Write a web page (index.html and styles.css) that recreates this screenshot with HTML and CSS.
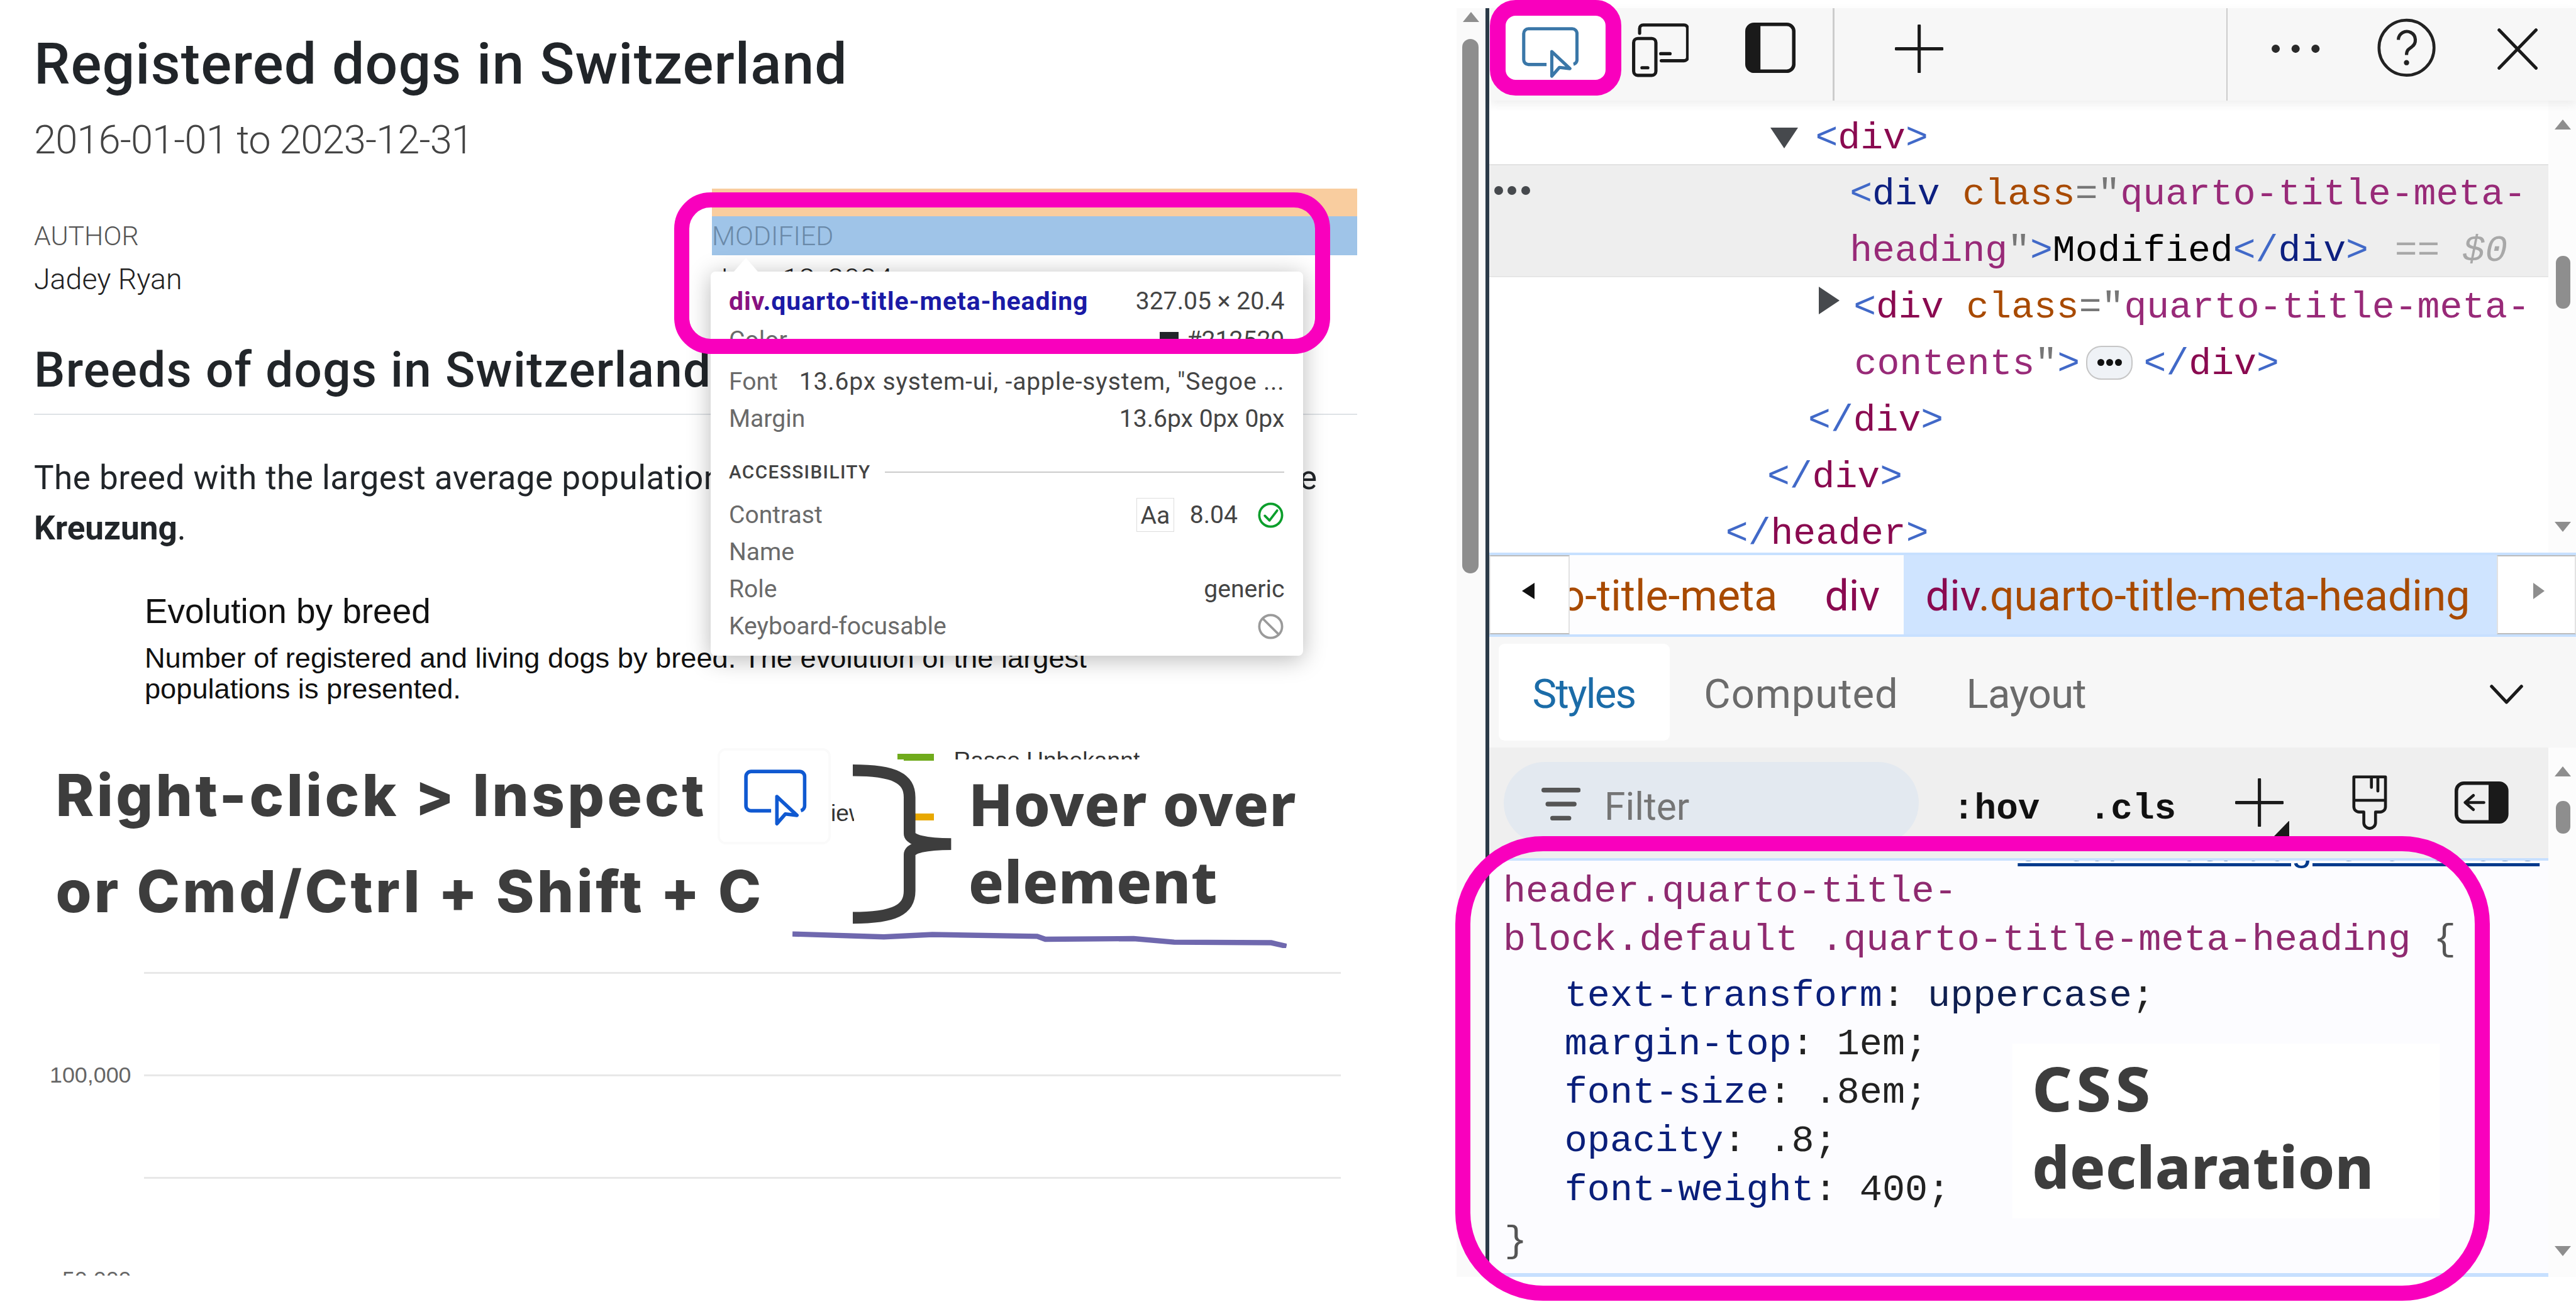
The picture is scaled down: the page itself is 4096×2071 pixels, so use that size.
FILE: index.html
```html
<!DOCTYPE html>
<html lang="en">
<head>
<meta charset="utf-8">
<title>Registered dogs in Switzerland – DevTools</title>
<link rel="stylesheet" href="styles.css">
</head>
<body>
<svg class="defs" aria-hidden="true">
  <symbol id="i-inspect" viewBox="0 0 97 88">
    <path d="M42 64H11a8 8 0 0 1-8-8V11a8 8 0 0 1 8-8h75a8 8 0 0 1 8 8v45a8 8 0 0 1-6 7.7" fill="none" stroke="currentColor" stroke-width="5.5"/>
    <path d="M51 42 82 71 64 69 51 84Z" fill="none" stroke="currentColor" stroke-width="5.5" stroke-linejoin="round"/>
  </symbol>
  <symbol id="i-plus" viewBox="0 0 83 83">
    <path d="M41.5 2v79M2 41.5h79" fill="none" stroke="#1a1a1a" stroke-width="5.5" stroke-linecap="round"/>
  </symbol>
</svg>
<main class="stage">
  <section class="page">
    <h1 class="title">Registered dogs in Switzerland</h1>
    <p class="subtitle">2016-01-01 to 2023-12-31</p>
    <div class="meta">
      <div>
        <div class="meta-box"><div class="meta-heading">Author</div></div>
        <div class="meta-value">Jadey Ryan</div>
      </div>
      <div>
        <div class="meta-box is-hover"><div class="meta-heading">Modified</div></div>
        <div class="meta-value">June 18, 2024</div>
      </div>
    </div>
    <h2 class="section">Breeds of dogs in Switzerland</h2>
    <p class="lead"><span>The breed with the largest average population</span><span>the</span></p>
    <p class="lead-end"><strong>Kreuzung</strong>.</p>
    <div class="chart-head">
      <div class="chart-title">Evolution by breed</div>
      <div class="chart-sub">Number of registered and living dogs by breed. The evolution of the largest<br>populations is presented.</div>
    </div>
    <div class="legend">
      <span></span><span class="swatch swatch-green"></span><span class="legend-text">Rasse Unbekannt</span>
      <span class="legend-cut">iew</span><span class="swatch swatch-orange"></span><span></span>
    </div>
    <div class="plot">
      <div class="plot-row"><span class="tick"></span><span class="gridline"></span></div>
      <div class="plot-row"><span class="tick">100,000</span><span class="gridline"></span></div>
      <div class="plot-row"><span class="tick"></span><span class="gridline"></span></div>
      <div class="plot-row"><span class="tick">50,000</span><span class="gridline"></span></div>
    </div>
  </section>

  <div class="page-scroll">
    <span class="arrow-up"></span>
    <span class="page-thumb"></span>
  </div>

  <section class="devtools">
    <header class="toolbar">
      <button class="tool-inspect"><svg class="ic-inspect"><use href="#i-inspect"/></svg></button>
      <svg class="ic-device" viewBox="0 0 97 92"><path d="M13 17V9a6 6 0 0 1 6-6h70a6 6 0 0 1 6 6v49a6 6 0 0 1-6 6H50M49 52h16" fill="none" stroke="#1a1a1a" stroke-width="5.5" stroke-linecap="round"/><rect x="2.8" y="26" width="38" height="63" rx="7" fill="none" stroke="#1a1a1a" stroke-width="5.5"/><path d="M17 76h10" stroke="#1a1a1a" stroke-width="5.5" stroke-linecap="round"/></svg>
      <svg class="ic-dock" viewBox="0 0 86 86"><rect x="3" y="3" width="80" height="80" rx="12" fill="none" stroke="#1a1a1a" stroke-width="6"/><path d="M14 3h12v80H14A11 11 0 0 1 3 72V14A11 11 0 0 1 14 3Z" fill="#1a1a1a"/></svg>
      <span class="tool-sep sep-a"></span>
      <svg class="ic-plus"><use href="#i-plus"/></svg>
      <span class="tool-sep sep-b"></span>
      <svg class="ic-more" viewBox="0 0 82 14"><circle cx="7" cy="7" r="7"/><circle cx="41" cy="7" r="7"/><circle cx="75" cy="7" r="7"/></svg>
      <svg class="ic-help" viewBox="0 0 100 103"><circle cx="50" cy="51.500" r="47" fill="none" stroke="#222" stroke-width="5"/><path d="M36 38a14.500 14.500 0 1 1 23 12c-6 4-9 6-9 14" fill="none" stroke="#222" stroke-width="5.500"/><circle cx="50" cy="77" r="4.500" fill="#222"/></svg>
      <svg class="ic-close" viewBox="0 0 69 71"><path d="M3 3l63 65M66 3 3 68" fill="none" stroke="#1a1a1a" stroke-width="5.500" stroke-linecap="round"/></svg>
    </header>

    <div class="elements">
      <div class="dom">
        <div class="row row-open"><span class="tri tri-down"></span><span class="b">&lt;</span><span class="t">div</span><span class="b">&gt;</span></div>
        <div class="row row-sel">
          <span class="gutter-dots"><i></i><i></i><i></i></span>
          <span class="line"><span class="b">&lt;</span><span class="ts">div</span> <span class="a">class</span><span class="q">="</span><span class="v">quarto-title-meta-</span></span>
          <span class="line"><span class="v">heading</span><span class="q">"</span><span class="b">&gt;</span>Modified<span class="b">&lt;/</span><span class="ts">div</span><span class="b">&gt;</span><span class="eq">== <em>$0</em></span></span>
        </div>
        <div class="row row-collapsed"><span class="tri tri-right"></span><span class="b">&lt;</span><span class="t">div</span> <span class="a">class</span><span class="q">="</span><span class="v">quarto-title-meta-</span></div>
        <div class="row row-contents"><span class="v">contents</span><span class="q">"</span><span class="b">&gt;</span><span class="pill"><i></i><i></i><i></i></span><span class="b">&lt;/</span><span class="t">div</span><span class="b">&gt;</span></div>
        <div class="row row-c1"><span class="b">&lt;/</span><span class="t">div</span><span class="b">&gt;</span></div>
        <div class="row row-c2"><span class="b">&lt;/</span><span class="t">div</span><span class="b">&gt;</span></div>
        <div class="row row-c3"><span class="b">&lt;/</span><span class="t">header</span><span class="b">&gt;</span></div>
      </div>
      <div class="side-scroll">
        <span class="arrow-up"></span>
        <span class="side-thumb thumb-dom"></span>
        <span class="arrow-down arrow-dom"></span>
      </div>
    </div>

    <nav class="crumbs">
      <button class="crumb-btn"><span class="crumb-left"></span></button>
      <div class="crumb-list">
        <span class="crumb"><span class="c-tag">div</span><span class="c-cls">.quarto-title-meta</span></span>
        <span class="crumb"><span class="c-tag">div</span></span>
        <span class="crumb crumb-on"><span class="c-tag">div</span><span class="c-cls">.quarto-title-meta-heading</span></span>
      </div>
      <button class="crumb-btn crumb-btn-r"><span class="crumb-right"></span></button>
    </nav>

    <div class="tabs">
      <span class="tab tab-on">Styles</span>
      <span class="tab tab-computed">Computed</span>
      <span class="tab tab-layout">Layout</span>
      <svg class="ic-chevron" viewBox="0 0 57 33"><path d="M3 3l25.500 27L54 3" fill="none" stroke="#1a1a1a" stroke-width="5.500" stroke-linecap="round" stroke-linejoin="round"/></svg>
    </div>

    <div class="lower">
      <div class="lower-main">
        <div class="filterbar">
          <div class="filter">
            <svg class="ic-filter" viewBox="0 0 67 56"><path d="M4 4h59M11 28h45M19 52h28" fill="none" stroke="#555" stroke-width="8" stroke-linecap="round"/></svg>
            <span class="filter-text">Filter</span>
          </div>
          <span class="pseudo pseudo-hov">:hov</span>
          <span class="pseudo pseudo-cls">.cls</span>
          <span class="plus-wrap"><svg class="ic-plus2"><use href="#i-plus"/></svg><svg class="plus-corner" viewBox="0 0 27 28"><path d="M27 0v28H0Z" fill="#1a1a1a"/></svg></span>
          <svg class="ic-brush" viewBox="0 0 60 93"><path d="M3 3h54v51a9 9 0 0 1-9 9h-8v18a10 10 0 0 1-20 0V63h-8a9 9 0 0 1-9-9ZM3 43h54M33 3v18M44 3v24" fill="none" stroke="#1a1a1a" stroke-width="5" stroke-linecap="round" stroke-linejoin="round"/></svg>
          <svg class="ic-toggle" viewBox="0 0 92 72"><rect x="3" y="3" width="86" height="66" rx="13" fill="none" stroke="#1a1a1a" stroke-width="6"/><path d="M58 3h18a13 13 0 0 1 13 13v40a13 13 0 0 1-13 13H58Z" fill="#1a1a1a"/><path d="M50 36H18M32 24 18 36l14 12" fill="none" stroke="#1a1a1a" stroke-width="5" stroke-linecap="round" stroke-linejoin="round"/></svg>
        </div>
        <div class="rules">
          <div class="source-cut"><a class="source-link">site/libs/aug-theme.css</a></div>
          <div class="selector">header.quarto-title-<br>block.default .quarto-title-meta-heading <span class="brace">{</span></div>
          <div class="decls">
            <div><span class="p">text-transform</span>: <span class="val-kw">uppercase</span>;</div>
            <div><span class="p">margin-top</span>: 1em;</div>
            <div><span class="p">font-size</span>: .8em;</div>
            <div><span class="p">opacity</span>: .8;</div>
            <div><span class="p">font-weight</span>: 400;</div>
          </div>
          <div class="brace-end brace">}</div>
        </div>
      </div>
      <div class="side-scroll">
        <span class="arrow-up"></span>
        <span class="side-thumb thumb-css"></span>
        <span class="arrow-down arrow-css"></span>
      </div>
    </div>
  </section>

  <aside class="tooltip">
    <div class="tip-row tip-head"><span class="tip-sel"><span class="tip-tag">div</span><span class="tip-cls">.quarto-title-meta-heading</span></span><span class="tip-val">327.05 × 20.4</span></div>
    <div class="tip-row tip-color"><span class="tip-label">Color</span><span class="tip-val"><i class="chip"></i>#212529</span></div>
    <div class="tip-row tip-font"><span class="tip-label">Font</span><span class="tip-val tip-val-font">13.6px system-ui, -apple-system, "Segoe ...</span></div>
    <div class="tip-row"><span class="tip-label">Margin</span><span class="tip-val">13.6px 0px 0px</span></div>
    <div class="tip-section"><span>ACCESSIBILITY</span><i></i></div>
    <div class="tip-row"><span class="tip-label">Contrast</span><span class="tip-contrast"><span class="aa">Aa</span><span class="tip-val">8.04</span><svg class="ic-check" viewBox="0 0 44 44"><circle cx="22" cy="22" r="19.500" fill="none" stroke="#0b9e2b" stroke-width="4"/><path d="M12 23l8 8 13-17" fill="none" stroke="#0b9e2b" stroke-width="4" stroke-linecap="round" stroke-linejoin="round"/></svg></span></div>
    <div class="tip-row"><span class="tip-label">Name</span></div>
    <div class="tip-row"><span class="tip-label">Role</span><span class="tip-val">generic</span></div>
    <div class="tip-row"><span class="tip-label">Keyboard-focusable</span><svg class="ic-no" viewBox="0 0 44 44"><circle cx="22" cy="22" r="19.500" fill="none" stroke="#9a9a9a" stroke-width="4"/><path d="M8 8l28 28" stroke="#9a9a9a" stroke-width="4"/></svg></div>
  </aside>

  <div class="cover cover-brace"></div>
  <div class="cover cover-hover"></div>

  <div class="note note-shortcut">
    <div>Right-click &gt; Inspect</div>
    <div>or Cmd/Ctrl + Shift + C</div>
  </div>
  <div class="icon-tile"><svg class="ic-tile"><use href="#i-inspect"/></svg></div>
  <svg class="brace-mark" viewBox="0 0 168 273"><path d="M0 10C72 10 97 24 97 56v62c0 12 28 18 71 18-43 0-71 6-71 18v62c0 32-25 46-97 46" fill="none" stroke="#3d3d3d" stroke-width="20"/></svg>
  <div class="note note-hover"><div>Hover over</div><div>element</div></div>
  <svg class="squiggle" viewBox="0 0 844 30"><path d="M0 6 156 11 239 7 418 10 432 15 583 14 652 20 818 21 844 27" fill="none" stroke="#6f68ae" stroke-width="9"/></svg>
  <div class="note note-css"><div class="note-css-word">CSS</div><div>declaration</div></div>

  <div class="mark mark-inspect"></div>
  <div class="mark mark-hover"></div>
  <div class="mark mark-css"></div>
</main>
</body>
</html>
```
FILE: styles.css
```css
html, body { margin: 0; padding: 0; background: #fff; overflow: hidden; }
.defs { position: absolute; width: 0; height: 0; }

.stage {
  zoom: 0.93091;
  position: relative;
  display: flex;
  align-items: flex-start;
  width: 4400px;
  height: 2225px;
  overflow: hidden;
  background: #fff;
  font-family: Roboto, "Liberation Sans", sans-serif;
  color: #212529;
}
.stage > * { flex: none; box-sizing: border-box; }
p, h1, h2 { margin: 0; }

/* ---- left page ---- */
.page {
  width: 2488px;
  height: 2180px;
  padding: 59px 0 0 58px;
  overflow: hidden;
}
.title { font-size: 98px; line-height: 100px; font-weight: 500; letter-spacing: 1.2px; }
.subtitle { margin-top: 40px; font-size: 68px; line-height: 80px; font-weight: 300; color: #444; letter-spacing: -1px; }
.meta {
  display: grid;
  grid-template-columns: 1158px 1102px;
  margin-top: 43px;
}
.meta-box { padding-top: 48px; }
.meta-box.is-hover { background: #f9cd9f; }
.meta-box.is-hover .meta-heading { background: #9fc4e8; color: #6a89a8; }
.meta-heading {
  height: 66px;
  padding-top: 2px;
  box-sizing: border-box;
  font-size: 46px;
  line-height: 64px;
  font-weight: 300;
  color: #555;
  text-transform: uppercase;
}
.meta-value { margin-top: 11px; font-size: 50px; line-height: 62px; font-weight: 300; color: #222; }
.section {
  width: 2260px;
  margin-top: 79px;
  padding-bottom: 29px;
  border-bottom: 3px solid #dee2e6;
  font-size: 84px;
  line-height: 90px;
  font-weight: 500;
  letter-spacing: 1.4px;
}
.lead { display: flex; justify-content: space-between; width: 2192px; margin-top: 64px; font-size: 57px; line-height: 86px; letter-spacing: .5px; }
.lead-end { font-size: 57px; line-height: 86px; }
.lead-end strong { font-weight: 700; }

.chart-head { margin: 70px 0 0 189px; font-family: "Liberation Sans", sans-serif; color: #111; }
.chart-title { font-size: 59px; line-height: 60px; }
.chart-sub { margin-top: 24px; font-size: 48.600px; line-height: 52px; }

.legend {
  display: grid;
  grid-template-columns: 114px 62px 312px;
  grid-template-rows: 101px 40px;
  column-gap: 0;
  margin: 76px 0 0 1361px;
  font-family: "Liberation Sans", sans-serif;
  font-size: 40px;
  line-height: 40px;
  color: #333;
}
.swatch { height: 12px; margin-top: 9px; }
.swatch-green { background: #70ab1c; }
.swatch-orange { background: #e8a800; margin-top: 10px; height: 12px; }
.legend-text { margin-left: 34px; white-space: nowrap; }
.legend-cut { overflow: hidden; white-space: nowrap; font-size: 40px; margin-top: -10px; }

.plot { width: 2232px; margin-top: 241px; font-family: "Liberation Sans", sans-serif; }
.plot-row { display: flex; height: 175px; }
.tick { width: 166px; margin-top: -19px; font-size: 38.5px; line-height: 40px; text-align: right; color: #666; }
.gridline { flex: 1; margin-left: 22px; height: 3px; background: #e8e8e8; }

/* ---- scrollbars ---- */
.page-scroll {
  display: flex;
  flex-direction: column;
  width: 49px;
  height: 2168px;
  margin-top: 14px;
  padding: 6px 0 0 11px;
  background: #fafafa;
}
.arrow-up, .arrow-down {
  display: block;
  width: 0;
  height: 0;
  border-left: 15px solid transparent;
  border-right: 15px solid transparent;
}
.arrow-up { border-bottom: 18px solid #8e8e8e; }
.arrow-down { border-top: 18px solid #8e8e8e; }
.page-thumb { display: block; width: 28px; height: 914px; margin: 29px 0 0 -1px; border-radius: 14px; background: #8e8e8e; }

.side-scroll { flex: none; width: 47px; padding: 32px 0 0 10px; box-sizing: border-box; background: #fcfcfc; display: flex; flex-direction: column; }
.side-thumb { display: block; width: 24px; margin-left: 3px; border-radius: 12px; background: #8e8e8e; }
.thumb-dom { height: 90px; margin-top: 216px; }
.arrow-dom { margin-top: 364px; }
.thumb-css { height: 56px; margin-top: 42px; }
.arrow-css { margin-top: 705px; }

/* ---- devtools ---- */
.devtools {
  display: flex;
  flex-direction: column;
  width: 1863px;
  height: 2168px;
  margin-top: 14px;
  border-left: 7px solid #2b3a48;
}
.toolbar {
  position: relative;
  z-index: 1;
  display: flex;
  align-items: flex-start;
  flex: none;
  height: 158px;
  background: #f7f7f7;
  box-shadow: 0 6px 16px rgba(0, 0, 0, .07);
}
.toolbar svg { display: block; flex: none; }
.tool-inspect { flex: none; width: 171px; height: 109px; margin: 13px 0 0 27px; padding: 18px 0 0 29px; border: 0; border-radius: 10px; background: #fff; box-sizing: border-box; color: #3a77a8; }
.ic-inspect { width: 97px; height: 88px; }
.ic-device { width: 97px; height: 92px; margin: 26px 0 0 46px; }
.ic-dock { width: 86px; height: 86px; margin: 25px 0 0 97px; }
.tool-sep { flex: none; width: 3px; height: 158px; background: #cccccc; }
.sep-a { margin-left: 63px; }
.ic-plus { width: 83px; height: 83px; margin: 28px 0 0 103px; }
.sep-b { margin-left: 483px; }
.ic-more { width: 82px; height: 14px; margin: 62px 0 0 75px; fill: #2a2a2a; }
.ic-help { width: 100px; height: 103px; margin: 16px 0 0 98px; }
.ic-close { width: 69px; height: 71px; margin: 34px 0 0 105px; }

.elements { display: flex; flex: none; height: 772px; background: #fff; }
.dom {
  flex: 1;
  padding-top: 17px;
  font-family: "Liberation Mono", monospace;
  font-size: 64.200px;
  line-height: 96.500px;
  white-space: nowrap;
  color: #000;
}
.row { position: relative; height: 96.500px; }
.b { color: #4169c8; }
.t { color: #8a0a50; }
.ts { color: #0d2080; }
.a { color: #a84a00; }
.q { color: #777; }
.v { color: #982a78; }
.tri { display: inline-block; width: 0; height: 0; }
.tri-down { border-top: 36px solid #46494d; border-left: 24px solid transparent; border-right: 24px solid transparent; margin-right: 29px; }
.tri-right { border-left: 36px solid #46494d; border-top: 24px solid transparent; border-bottom: 24px solid transparent; margin-right: 24px; vertical-align: 6px; }
.row-open { padding-left: 481px; }
.row-sel {
  height: 193px;
  margin: -5px 0 5px;
  padding: 2px 0 0 616px;
  box-sizing: border-box;
  background: #eee;
  border-top: 3px solid #e2e2e2;
  border-bottom: 3px solid #e6e6e6;
}
.line { display: block; }
.gutter-dots { position: absolute; left: 9px; top: 35px; display: flex; gap: 8px; }
.gutter-dots i { width: 15px; height: 15px; border-radius: 50%; background: #46494d; }
.eq { margin-left: 45px; color: #a8a8a8; }
.eq em { font-style: italic; }
.row-collapsed { padding-left: 563px; }
.row-contents { padding-left: 624px; }
.pill {
  display: inline-flex;
  align-items: center;
  justify-content: center;
  gap: 3px;
  box-sizing: border-box;
  width: 79px;
  height: 58px;
  margin: 0 19px 0 11px;
  border: 3px solid #c6c6c6;
  border-radius: 26px;
  background: #eff2f6;
  vertical-align: 14px;
}
.pill i { width: 12px; height: 12px; border-radius: 50%; background: #111; }
.row-c1 { padding-left: 545px; }
.row-c2 { padding-left: 475px; }
.row-c3 { padding-left: 404px; }

.crumbs {
  display: flex;
  flex: none;
  height: 144px;
  box-sizing: border-box;
  border-top: 5px solid #c7e0ff;
  border-bottom: 5px solid #c7e0ff;
  background: #fff;
}
.crumb-btn { flex: none; width: 138px; padding: 0; border: 3px solid #e2e2e2; border-top-color: #bcbcbc; border-bottom-color: #bcbcbc; background: #fff; }
.crumb-btn-r { width: 135px; }
.crumb-left { display: block; width: 0; height: 0; margin: -12px 0 0 54px; border-top: 15px solid transparent; border-bottom: 15px solid transparent; border-right: 22px solid #111; }
.crumb-right { display: block; width: 0; height: 0; margin: -12px 0 0 60px; border-top: 15px solid transparent; border-bottom: 15px solid transparent; border-left: 20px solid #8e8e8e; }
.crumb-list {
  display: flex;
  justify-content: flex-end;
  flex: 1;
  min-width: 0;
  overflow: hidden;
  background: #fdfdfe;
  font-size: 73px;
  line-height: 134px;
  white-space: nowrap;
}
.crumb { flex: none; padding: 4px 41px 0 40px; }
.crumb-on { padding: 4px 46px 0 37px; background: #cfe4ff; }
.c-tag { color: #8a0a50; }
.c-cls { color: #a84a00; }

.tabs { display: flex; align-items: flex-start; flex: none; height: 189px; padding-left: 16px; background: #f7f7f7; box-sizing: border-box; }
.tab { height: 165px; margin-top: 12px; padding: 4px 58px 0; box-sizing: border-box; font-size: 70px; line-height: 165px; color: #6b6b6b; }
.tab-computed { letter-spacing: 1px; }
.tab-layout { letter-spacing: -.8px; }
.tab-on { width: 293px; padding-right: 0; border-radius: 10px; background: #fff; color: #1b6ca8; letter-spacing: -2px; }
.ic-chevron { width: 57px; height: 33px; margin: 82px 0 0 auto; margin-right: 90px; }

.lower { display: flex; flex: 1; min-height: 0; }
.lower-main { flex: 1; display: flex; flex-direction: column; }
.filterbar { display: flex; align-items: center; flex: none; height: 189px; padding-left: 25px; box-sizing: border-box; background: #efefef; }
.filter { display: flex; align-items: center; flex: none; width: 709px; height: 140px; padding-left: 64px; box-sizing: border-box; border-radius: 70px; background: #e3e9f0; }
.ic-filter { width: 67px; height: 56px; margin-top: 4px; }
.filter-text { margin-left: 41px; padding-top: 16px; font-size: 65px; line-height: 90px; color: #757575; }
.pseudo { padding-top: 22px; font-family: "Liberation Mono", monospace; font-weight: 700; font-size: 62px; line-height: 80px; color: #111; }
.pseudo-hov { margin-left: 58px; }
.pseudo-cls { margin-left: 84px; }
.plus-wrap { position: relative; flex: none; width: 83px; height: 83px; margin-left: 101px; }
.ic-plus2 { display: block; width: 83px; height: 83px; }
.plus-corner { position: absolute; left: 65px; top: 72px; width: 27px; height: 28px; }
.ic-brush { flex: none; width: 60px; height: 93px; margin-left: 117px; }
.ic-toggle { flex: none; width: 92px; height: 72px; margin-left: 115px; }

.rules {
  position: relative;
  flex: 1;
  min-height: 0;
  padding: 12px 0 0 24px;
  border-top: 5px solid #c7e0ff;
  border-bottom: 7px solid #c7e0ff;
  background: #fcfcff;
  font-family: "Liberation Mono", monospace;
  font-size: 64.600px;
  line-height: 83px;
  color: #222;
}
.source-cut { position: absolute; left: 903px; top: 0; width: 894px; height: 16px; overflow: hidden; }
.source-link { display: block; margin-top: -58px; color: #003a8c; text-decoration: underline; text-decoration-thickness: 5px; text-underline-offset: 4px; white-space: nowrap; }
.selector { color: #8f2a70; }
.brace { color: #555; }
.decls { margin: 12px 0 0 105px; }
.p { color: #0a1f7a; }
.val-kw { color: #0f1f50; }
.brace-end { margin: 5px 0 0 2px; }

/* ---- inspector tooltip ---- */
.tooltip {
  position: absolute;
  left: 1214px;
  top: 464px;
  width: 1012px;
  height: 656px;
  padding: 19px 32px 0 31px;
  border-radius: 8px;
  background: #fff;
  box-shadow: 0 6px 40px rgba(0, 0, 0, .28);
  font-size: 42px;
  line-height: 63.500px;
  white-space: nowrap;
}
.tooltip::before {
  content: "";
  position: absolute;
  left: 40px;
  top: -24px;
  width: 0;
  height: 0;
  border-left: 21px solid transparent;
  border-right: 21px solid transparent;
  border-bottom: 24px solid #fff;
}
.tip-row { display: flex; justify-content: space-between; align-items: center; height: 63.500px; }
.tip-head { margin-bottom: 4px; }
.tip-font { margin-top: 7px; }
.tip-sel { font-size: 44px; font-weight: 700; letter-spacing: 1px; }
.tip-tag { color: #881280; }
.tip-cls { color: #1a1aa6; }
.tip-val { color: #444; }
.tip-val-font { letter-spacing: .9px; }
.tip-label { color: #6a6a6a; }
.chip { display: inline-block; width: 32px; height: 32px; margin-right: 14px; background: #212529; vertical-align: -4px; }
.tip-section { display: flex; align-items: center; gap: 24px; height: 63.500px; margin: 27px 0 10px; font-size: 32px; letter-spacing: 1.5px; font-weight: 500; color: #444; }
.tip-section i { flex: 1; height: 2px; background: #ccc; }
.tip-contrast { display: flex; align-items: center; }
.aa { display: block; width: 64px; height: 58px; margin-right: 27px; box-sizing: border-box; border: 2px solid #ddd; text-align: center; line-height: 58px; color: #444; }
.ic-check { width: 44px; height: 44px; margin-left: 34px; margin-right: 2px; }
.ic-no { width: 44px; height: 44px; margin-right: 2px; }

/* ---- annotations ---- */
.cover { position: absolute; background: #fff; }
.cover-brace { left: 1459px; top: 1298px; width: 85px; height: 285px; }
.cover-hover { left: 1595px; top: 1298px; width: 690px; height: 295px; }

.note {
  position: absolute;
  z-index: 2;
  font-family: "Noto Sans", sans-serif;
  font-weight: 800;
  font-size: 100px;
  letter-spacing: .5px;
  color: #3d3d3d;
  white-space: nowrap;
}
.note-shortcut { left: 95px; top: 1276px; font-family: Inter, sans-serif; font-weight: 800; font-size: 99px; letter-spacing: 4.700px; line-height: 165px; }
.note-hover { left: 1654px; top: 1307px; line-height: 132px; }
.note-css { left: 3437px; top: 1783px; width: 730px; height: 299px; padding: 10px 0 0 34px; background: #fff; line-height: 133px; }
.note-css-word { font-size: 106px; letter-spacing: 7px; }

.icon-tile { position: absolute; z-index: 2; left: 1226px; top: 1278px; width: 193px; height: 165px; padding: 37px 0 0 45px; border-radius: 14px; background: #fff; box-shadow: inset 0 0 0 4px #fafafa; color: #1059d1; }
.ic-tile { display: block; width: 107px; height: 97px; }
.brace-mark { position: absolute; z-index: 2; left: 1457px; top: 1306px; width: 168px; height: 273px; }
.squiggle { position: absolute; z-index: 2; left: 1354px; top: 1590px; width: 844px; height: 30px; }

.mark { position: absolute; z-index: 3; border: 26px solid #f900bd; }
.mark-inspect { left: 2545px; top: 0; width: 224px; height: 163px; border-width: 27px; border-radius: 44px; }
.mark-hover { left: 1152px; top: 329px; width: 1120px; height: 276px; border-radius: 62px; }
.mark-css { left: 2486px; top: 1429px; width: 1767px; height: 794px; border-radius: 150px; }
```
